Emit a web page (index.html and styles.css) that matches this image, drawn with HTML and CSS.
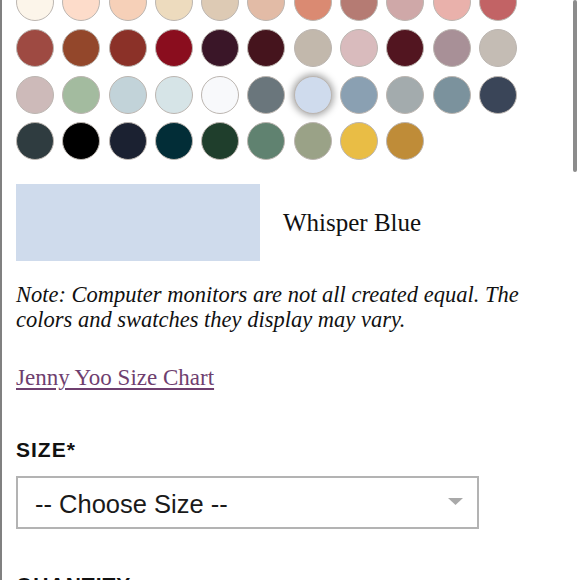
FILE: index.html
```html
<!DOCTYPE html>
<html>
<head>
<meta charset="utf-8">
<link rel="stylesheet" href="styles.css">
</head>
<body>
<div class="page">
  <div class="swatches">
    <span class="sw" style="background:#fcf5ea"></span>
    <span class="sw" style="background:#fddcca"></span>
    <span class="sw" style="background:#f6d0b8"></span>
    <span class="sw" style="background:#eddbbe"></span>
    <span class="sw" style="background:#ddcab4"></span>
    <span class="sw" style="background:#e2bba6"></span>
    <span class="sw" style="background:#da8a72"></span>
    <span class="sw" style="background:#b57b73"></span>
    <span class="sw" style="background:#cfa8a8"></span>
    <span class="sw" style="background:#e9b1ab"></span>
    <span class="sw" style="background:#c26365"></span>

    <span class="sw" style="background:#9e4a42"></span>
    <span class="sw" style="background:#93472b"></span>
    <span class="sw" style="background:#8b3128"></span>
    <span class="sw" style="background:#8a0d1e"></span>
    <span class="sw" style="background:#3a1628"></span>
    <span class="sw" style="background:#45141d"></span>
    <span class="sw" style="background:#c2b8ac"></span>
    <span class="sw" style="background:#d9bbbd"></span>
    <span class="sw" style="background:#521520"></span>
    <span class="sw" style="background:#a89097"></span>
    <span class="sw" style="background:#c4bcb4"></span>

    <span class="sw" style="background:#cdbab9"></span>
    <span class="sw" style="background:#a3bb9f"></span>
    <span class="sw" style="background:#c2d3d9"></span>
    <span class="sw" style="background:#d6e4e7"></span>
    <span class="sw" style="background:#f8f9fb"></span>
    <span class="sw" style="background:#6a767c"></span>
    <span class="sw selected" style="background:#cfdbed"></span>
    <span class="sw" style="background:#8aa0b2"></span>
    <span class="sw" style="background:#a3abad"></span>
    <span class="sw" style="background:#7b929d"></span>
    <span class="sw" style="background:#3a4558"></span>

    <span class="sw" style="background:#2f3c40"></span>
    <span class="sw" style="background:#000000"></span>
    <span class="sw" style="background:#1b2131"></span>
    <span class="sw" style="background:#022d37"></span>
    <span class="sw" style="background:#1f3e2c"></span>
    <span class="sw" style="background:#608270"></span>
    <span class="sw" style="background:#9aa287"></span>
    <span class="sw" style="background:#e9bd45"></span>
    <span class="sw" style="background:#bf8c38"></span>
  </div>

  <div class="preview">
    <div class="preview-box"></div>
    <div class="preview-name">Whisper Blue</div>
  </div>

  <p class="note">Note: Computer monitors are not all created equal. The colors and swatches they display may vary.</p>

  <a class="size-chart" href="#">Jenny Yoo Size Chart</a>

  <div class="label">SIZE*</div>
  <div class="select">
    <span class="select-text">-- Choose Size --</span>
    <svg class="caret" width="15" height="7" viewBox="0 0 15 7"><path d="M0 0H15L7.5 7Z" fill="#a9a9a9"/></svg>
  </div>

  <div class="label quantity">QUANTITY</div>

  <div class="scrollbar"></div>
</div>
</body>
</html>
```

FILE: styles.css
```css
html, body {
  margin: 0;
  padding: 0;
  background: #fff;
  width: 580px;
  height: 580px;
  overflow: hidden;
}

.page {
  position: relative;
  display: flow-root;
  box-sizing: border-box;
  height: 580px;
  border-left: 2px solid #808080;
  padding-left: 14px;
  color: #111;
}

.swatches {
  display: grid;
  grid-template-columns: repeat(11, 38px);
  column-gap: 8.3px;
  row-gap: 8.5px;
  margin-top: -17.5px;
}

.sw {
  display: block;
  width: 38px;
  height: 38px;
  box-sizing: border-box;
  border-radius: 50%;
  border: 1.5px solid #bcb6b1;
}

.sw.selected {
  box-shadow: 0 0 7px 2px rgba(0, 0, 0, 0.35);
}

.preview {
  display: flex;
  align-items: center;
  gap: 23px;
  margin-top: 24px;
}

.preview-box {
  width: 244px;
  height: 77px;
  background: #cfdbec;
}

.preview-name {
  font-family: "Liberation Serif", serif;
  font-size: 25px;
  color: #111;
}

.note {
  margin: 21px 0 0 0;
  max-width: 520px;
  font-family: "Liberation Serif", serif;
  font-style: italic;
  font-size: 22.5px;
  line-height: 25px;
  color: #111;
}

.size-chart {
  display: block;
  margin-top: 33px;
  width: max-content;
  font-family: "Liberation Serif", serif;
  font-size: 23px;
  line-height: 26px;
  color: #6f3f6f;
  text-decoration: underline;
  text-underline-offset: 3px;
}

.label {
  margin-top: 46px;
  font-family: "Liberation Sans", Arial, sans-serif;
  font-weight: bold;
  font-size: 21px;
  line-height: 26px;
  letter-spacing: 1px;
  color: #111;
}

.select {
  display: flex;
  align-items: center;
  justify-content: space-between;
  box-sizing: border-box;
  width: 463px;
  height: 53px;
  margin-top: 13px;
  padding: 3px 14px 0 17px;
  border: 2px solid #b3b3b3;
}

.select-text {
  font-family: "Liberation Sans", Arial, sans-serif;
  font-size: 25.5px;
  color: #1a1a1a;
}

.caret {
  display: block;
  margin-top: -6px;
}

.quantity {
  margin-top: 43px;
}

.scrollbar {
  position: absolute;
  top: 0;
  right: 3px;
  width: 4px;
  height: 172px;
  border-radius: 2px;
  background: #8c8c8c;
}
```
